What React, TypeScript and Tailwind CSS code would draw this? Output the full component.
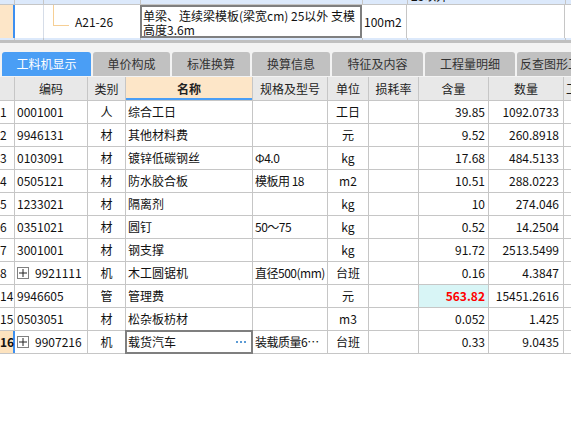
import React from 'react';

interface Row {
  no: string;
  code: string;
  type: string;
  name: string;
  spec?: string;
  unit: string;
  qty: string;
  total: string;
  expand?: boolean;
  highlight?: boolean;
  selected?: boolean;
}

const rows: Row[] = [
  { no: '1', code: '0001001', type: '人', name: '综合工日', unit: '工日', qty: '39.85', total: '1092.0733' },
  { no: '2', code: '9946131', type: '材', name: '其他材料费', unit: '元', qty: '9.52', total: '260.8918' },
  { no: '3', code: '0103091', type: '材', name: '镀锌低碳钢丝', spec: 'Φ4.0', unit: 'kg', qty: '17.68', total: '484.5133' },
  { no: '4', code: '0505121', type: '材', name: '防水胶合板', spec: '模板用 18', unit: 'm2', qty: '10.51', total: '288.0223' },
  { no: '5', code: '1233021', type: '材', name: '隔离剂', unit: 'kg', qty: '10', total: '274.046' },
  { no: '6', code: '0351021', type: '材', name: '圆钉', spec: '50～75', unit: 'kg', qty: '0.52', total: '14.2504' },
  { no: '7', code: '3001001', type: '材', name: '钢支撑', unit: 'kg', qty: '91.72', total: '2513.5499' },
  { no: '8', code: '9921111', type: '机', name: '木工圆锯机', spec: '直径500(mm)', unit: '台班', qty: '0.16', total: '4.3847', expand: true },
  { no: '14', code: '9946605', type: '管', name: '管理费', unit: '元', qty: '563.82', total: '15451.2616', highlight: true },
  { no: '15', code: '0503051', type: '材', name: '松杂板枋材', unit: 'm3', qty: '0.052', total: '1.425' },
  { no: '16', code: '9907216', type: '机', name: '载货汽车', spec: '装载质量6…', unit: '台班', qty: '0.33', total: '9.0435', expand: true, selected: true },
];

const tabs = [
  { label: '工料机显示', w: 'w-[89px]' },
  { label: '单价构成', w: 'w-[77px]' },
  { label: '标准换算', w: 'w-[78px]' },
  { label: '换算信息', w: 'w-[78px]' },
  { label: '特征及内容', w: 'w-[91px]' },
  { label: '工程量明细', w: 'w-[90px]' },
  { label: '反查图形工程量', w: 'w-[90px]' },
];

function PlusBox() {
  return (
    <span className="inline-flex items-center justify-center w-[12px] h-[12px] border border-[#808080] bg-white shrink-0">
      <svg width="8" height="8" viewBox="0 0 8 8">
        <path d="M0 4h8M4 0v8" stroke="#222" strokeWidth="1" />
      </svg>
    </span>
  );
}

function StripCells({ children }: { children?: React.ReactNode }) {
  return (
    <>
      <div className="w-[15px] h-full border-r border-[#c6c6c6]" />
      <div className="w-[29px] h-full border-r border-[#c6c6c6]" />
      <div className="w-[97px] h-full border-r border-[#c6c6c6]" />
      <div className="w-[222px] h-full border-r border-[#c6c6c6]" />
      <div className="w-[45px] h-full border-r border-[#c6c6c6]" />
      <div className="w-[158px] h-full border-r border-[#c6c6c6] overflow-hidden">{children}</div>
      <div className="flex-1" />
    </>
  );
}

export default function App() {
  return (
    <div className="w-[571px] h-[447px] bg-white overflow-hidden text-[12px] text-[#111] font-['Noto_Sans_CJK_SC',sans-serif]">
      {/* Upper grid (quota row being edited) */}
      <div className="flex h-[5px] bg-[#dce9fb] border-b border-[#c6c6c6]">
        <StripCells>
          <span className="block -mt-[11px] pl-[3px] leading-[14px] whitespace-nowrap">25以外</span>
        </StripCells>
      </div>
      <div className="flex h-[33px] bg-white">
        <div className="w-[13px] bg-[#fde6c8]" />
        <div className="w-[2px] bg-[#3d8ff0]" />
        <div className="w-[29px] border-r border-[#d6dde8]" />
        <div className="w-[96px] relative">
          <div className="absolute left-[9px] top-0 w-px h-[21px] bg-[#f6cf95]" />
          <div className="absolute left-[9px] top-[20px] w-[16px] h-px bg-[#f6cf95]" />
          <div className="pl-[31px] leading-[33px] whitespace-nowrap">A21-26</div>
        </div>
        <div className="w-[222px] border-2 border-[#7f7f7f] pl-px pt-[1.5px] leading-[14.5px] overflow-hidden">
          <div className="whitespace-nowrap">单梁、连续梁模板(梁宽cm) 25以外 支模</div>
          <div>高度3.6m</div>
        </div>
        <div className="w-[45px] border-r border-[#c6c6c6] pl-[2px] leading-[33px]">100m2</div>
        <div className="w-[158px] border-r border-[#c6c6c6]" />
        <div className="flex-1" />
      </div>
      <div className="flex h-[2px] bg-[#dce9fb]">
        <StripCells />
      </div>
      <div className="h-[3px] bg-[#c0c0c0]" />

      {/* Tabs */}
      <div className="flex gap-[2px] h-[34px] pt-[9px] pl-[2px] pb-px bg-[#f3f3f3] overflow-hidden">
        {tabs.map((t, i) => (
          <div
            key={t.label}
            className={`${t.w} shrink-0 h-[24px] rounded-t-[3px] text-center leading-[24px] whitespace-nowrap overflow-hidden ${
              i === 0 ? 'bg-[#4a9ef5] text-white' : 'bg-[#c1c1c1] text-[#333]'
            }`}
          >
            {t.label}
          </div>
        ))}
      </div>

      {/* Material grid */}
      <div className="flex h-[24px] bg-[#e8e8e8] border-b border-[#c6c6c6] leading-[23px] text-center text-[#222]">
        <div className="w-[15px] border-r border-[#c6c6c6]" />
        <div className="w-[73px] border-r border-[#c6c6c6]">编码</div>
        <div className="w-[38px] border-r border-[#c6c6c6]">类别</div>
        <div className="w-[127px] border-r border-[#c6c6c6] bg-[#fde6c8] font-bold shadow-[inset_0_-2px_0_#4a9ef5]">名称</div>
        <div className="w-[75px] border-r border-[#c6c6c6]">规格及型号</div>
        <div className="w-[41px] border-r border-[#c6c6c6]">单位</div>
        <div className="w-[50px] border-r border-[#c6c6c6]">损耗率</div>
        <div className="w-[70px] border-r border-[#c6c6c6]">含量</div>
        <div className="w-[75px] border-r border-[#c6c6c6]">数量</div>
        <div className="flex-1 text-left pl-[2px] overflow-hidden whitespace-nowrap">工</div>
      </div>

      {rows.map((r) => (
        <div key={r.no} className="flex h-[23px] border-b border-[#c6c6c6] leading-[22px]">
          <div
            className={`w-[15px] shrink-0 whitespace-nowrap ${
              r.selected ? 'bg-[#fde3bf] font-bold border-r-2 border-[#3d8ff0]' : 'border-r border-[#c6c6c6]'
            }`}
          >
            {r.no}
          </div>
          <div className="w-[73px] border-r border-[#c6c6c6] pl-[2px] flex items-center gap-[6px]">
            {r.expand && <PlusBox />}
            <span>{r.code}</span>
          </div>
          <div className="w-[38px] border-r border-[#c6c6c6] text-center">{r.type}</div>
          <div className="w-[127px] border-r border-[#c6c6c6] pl-[2px] relative">
            {r.name}
            {r.selected && (
              <div className="absolute -left-px -top-px w-[128px] h-[24px] border-2 border-[#7f7f7f] flex justify-end items-center pr-[4px]">
                <svg width="11" height="3" viewBox="0 0 11 3">
                  <rect x="0" y="0" width="2" height="2" fill="#5b9bd5" />
                  <rect x="4" y="0" width="2" height="2" fill="#5b9bd5" />
                  <rect x="8" y="0" width="2" height="2" fill="#5b9bd5" />
                </svg>
              </div>
            )}
          </div>
          <div className="w-[75px] border-r border-[#c6c6c6] pl-[2px] whitespace-nowrap overflow-hidden tracking-[-0.5px]">{r.spec}</div>
          <div className="w-[41px] border-r border-[#c6c6c6] text-center">{r.unit}</div>
          <div className="w-[50px] border-r border-[#c6c6c6]" />
          <div
            className={`w-[70px] border-r border-[#c6c6c6] text-right pr-[3px] ${
              r.highlight ? 'bg-[#d8f5f6] text-[#ff0000] font-bold' : ''
            }`}
          >
            {r.qty}
          </div>
          <div className="w-[75px] border-r border-[#c6c6c6] text-right pr-[4px]">{r.total}</div>
          <div className="flex-1" />
        </div>
      ))}
    </div>
  );
}
